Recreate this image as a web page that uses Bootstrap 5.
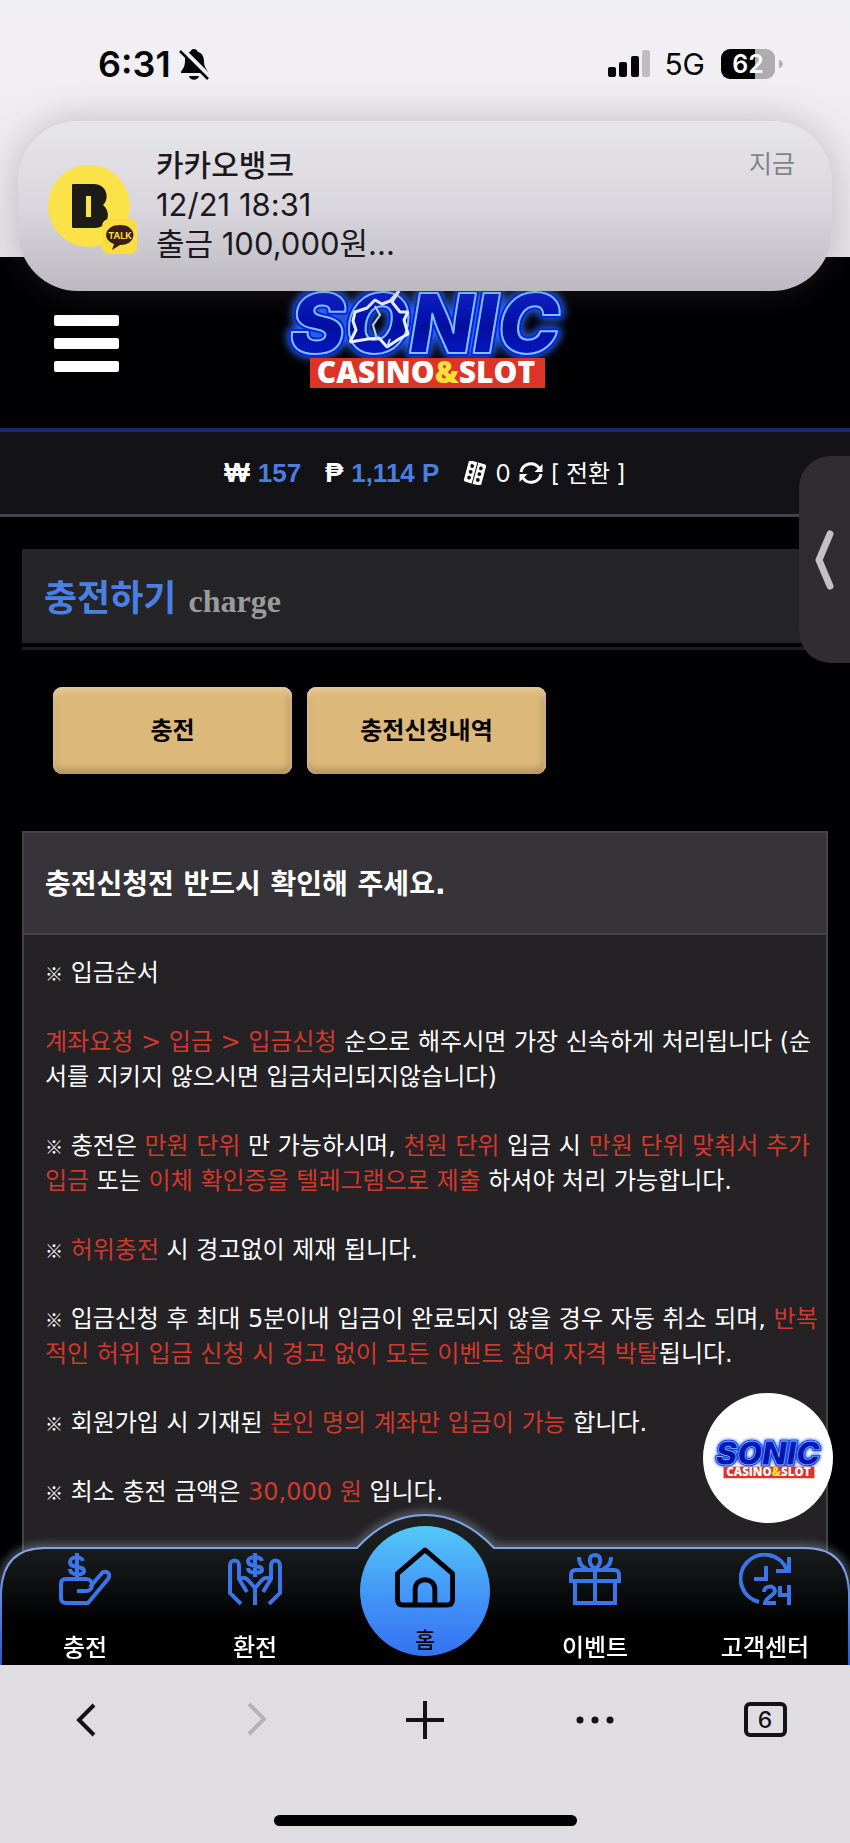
<!DOCTYPE html>
<html lang="ko">
<head>
<meta charset="utf-8">
<meta name="viewport" content="width=device-width, initial-scale=1">
<title>충전하기</title>
<link href="https://cdn.jsdelivr.net/npm/bootstrap@5.3.0/dist/css/bootstrap.min.css" rel="stylesheet">
<style>
  body { background: #010003; color: #fff; font-family: "Noto Sans CJK KR", sans-serif; font-size: 24px; line-height: 35px; }
  a { color: inherit; text-decoration: none; }
  svg { display: block; }
  .latin { font-family: "Inter", "Noto Sans CJK KR", sans-serif; }

  /* phone status area and notification */
  .status-area { height: 257px; background: linear-gradient(#f0eff1 0, #f1eff3 70px, #e6e4e8 257px); color: #050507; padding: 42px 67px 0 98px; }
  .clock { font-size: 36px; line-height: 44px; font-weight: 600; }
  .carrier { font-size: 30px; line-height: 44px; }
  .signal { margin-right: 13px; }
  .battery { width: 54px; height: 30px; border-radius: 9px; background: linear-gradient(90deg, #000 63%, #aeacb0 63%); color: #fff; font-size: 25px; line-height: 30px; font-weight: 600; text-align: center; }
  .notice { top: 121px; left: 18px; right: 18px; height: 170px; border-radius: 60px; padding: 24px 37px 0 30px; background: linear-gradient(#e6e5e8 0, #d9d7dd 50%, #bcb9c1 100%); color: #1b191f; box-shadow: 0 0 36px rgba(80, 76, 90, .3); z-index: 5; }
  .notice-text { font-size: 31px; line-height: 39px; }
  .notice-text strong { font-size: 30px; font-weight: 500; }
  .notice-time { color: #858289; font-size: 25px; }
  .avatar { width: 97px; height: 90px; margin-top: 19px; margin-right: 11px; }

  /* site header */
  .site-head { height: 175px; border-bottom: 4px solid #152a66; }
  .menu-btn { margin-left: 54px; margin-top: 13px; border: 0; padding: 0; background: none; }
  .menu-btn span { display: block; width: 65px; height: 11px; margin-bottom: 12px; border-radius: 2px; background: #fff; }
  .site-logo { left: 0; right: 0; top: 25px; }
  .wallet { height: 85px; background: #131216; border-bottom: 3px solid #444347; }
  .wallet-num { color: #4a7fdf; font: bold 26px/35px "Liberation Sans", sans-serif; }
  .coin { font: bold 27px/35px "Liberation Sans", sans-serif; }
  .side-tab { top: 456px; right: 0; width: 51px; height: 207px; border: 0; border-radius: 32px 0 0 32px; background: #302d32; padding: 0 0 0 16px; z-index: 4; }

  /* page title and tabs */
  .page-wrap { padding: 32px 22px 0; }
  .page-title { height: 94px; padding: 0 22px; gap: 12px; background: #252427; font-size: 36px; font-weight: 700; color: #4a80e4; margin: 0; }
  .page-title small { font: bold 32px/36px "Liberation Serif", serif; color: #9b9a9c; padding-top: 10px; }
  .title-rule { height: 3px; margin-top: 4px; background: #1d1c1f; }
  .tabs-row { padding: 37px 31px 57px; gap: 15px; }
  .gold-btn { width: 239px; height: 87px; border: 0; border-radius: 9px; background: #dcb87a; color: #060504; font-size: 24px; font-weight: 700; padding: 0 0 4px; box-shadow: inset 0 4px 6px #e8cd9c, inset 0 -5px 7px #b2945f, inset -4px 0 5px #c0a06a; }

  .guide { border: 2px solid #444347; background: #242225; padding-bottom: 300px; font-family: "DejaVu Sans", "Noto Sans CJK KR", sans-serif; }
  .guide-head { height: 102px; padding: 4px 21px 0; background: #363438; border-bottom: 2px solid #444347; font-size: 28px; font-weight: 700; margin: 0; }
  .guide-body { padding: 21px 0 0 21px; white-space: nowrap; }
  .guide-body p { margin: 0 0 34px; }
  .guide-body em { font-style: normal; color: #d0392c; }
  .note-mark { font: 18px/18px "Noto Sans CJK KR", sans-serif; }

  .float-logo { top: 1393px; right: 17px; width: 130px; height: 130px; border-radius: 50%; background: #fff; z-index: 2; }

  /* bottom navigation and browser bar */
  .dock { height: 117px; }
  .dock-bg { left: 0; bottom: 0; }
  .dock-item { width: 170px; height: 117px; flex: 0 1 170px; padding-top: 5px; font-size: 24px; font-weight: 500; color: #fff; }
  .dock-item svg { margin-bottom: 23px; }
  .home-item { height: 130px; width: 130px; margin: -22px 20px 0; padding-top: 20px; border-radius: 50%; background: linear-gradient(#54c8f7, #418ff8 60%, #3473f0); color: #02040a; flex: 0 0 130px; font-size: 22px; }
  .home-item svg { margin-bottom: 12px; }
  .browser { height: 178px; background: #dfdde2; }
  .browser button { border: 0; background: none; padding: 0; height: 109px; color: #141217; }
  .tab-count { width: 43px; height: 35px; border: 4px solid #141217; border-radius: 6px; font-size: 23px; line-height: 28px; font-weight: 500; }
  .home-bar { width: 303px; height: 11px; border-radius: 6px; background: #000; margin-top: 41px; }
</style>
</head>
<body class="min-vh-100 position-relative overflow-x-hidden">

<svg width="0" height="0" class="position-absolute" aria-hidden="true">
  <defs>
    <linearGradient id="blueInk" x1="0" y1="0" x2="0" y2="1"><stop offset="0" stop-color="#0a1fe8"/><stop offset=".55" stop-color="#0310a0"/><stop offset="1" stop-color="#0619d8"/></linearGradient>
    <filter id="glow" x="-20%" y="-30%" width="140%" height="160%"><feGaussianBlur stdDeviation="4"/></filter>
    <symbol id="wordmark" viewBox="0 0 300 110">
      <g font-family="Inter" font-weight="900" font-style="italic" font-size="83" stroke-linejoin="round">
        <text x="15" y="71" fill="#1d50e8" stroke="#2a6bf5" stroke-width="9" filter="url(#glow)">SONIC</text>
        <text x="15" y="71" fill="url(#blueInk)" stroke="#0a1fe8" stroke-width="6">SONIC</text>
        <text x="15" y="71" fill="url(#blueInk)" stroke="#7fc4ff" stroke-width="2">SONIC</text>
      </g>
      <rect x="35" y="76" width="235" height="30" fill="#dc3426"/>
      <text x="151" y="101" text-anchor="middle" font-family="Open Sans" font-weight="800" font-size="30" fill="#fff">CASINO<tspan fill="#fbe03a">&amp;</tspan>SLOT</text>
    </symbol>
  </defs>
</svg>

<div class="status-area latin d-flex justify-content-between align-items-start">
  <div class="d-flex align-items-center gap-2">
    <span class="clock">6:31</span>
    <svg width="30" height="32" viewBox="0 0 30 32" aria-label="무음"><path fill="#050507" d="M15 1c2 0 3 1 3.400 2.500C23 5 25 9 25 13c0 7 3 8 4 11v1H2v-1c1-3 4-4 4-11 0-4 1-8 5.600-9.500C12 2 13 1 15 1zM10 28h10c-1 5-9 5-10 0z"/><path d="M2 1l28 28" stroke="#f0eff2" stroke-width="6"/><path d="M1 3l28 28" stroke="#050507" stroke-width="2.500"/></svg>
  </div>
  <div class="d-flex align-items-center">
    <svg width="43" height="28" viewBox="0 0 43 28" class="signal"><g fill="#050507"><rect y="17" width="8" height="10" rx="2"/><rect x="11" y="12" width="8" height="15" rx="2"/><rect x="23" y="6" width="8" height="21" rx="2"/></g><rect x="34" width="8" height="27" rx="2" fill="#bfbdc1"/></svg>
    <span class="carrier me-3">5G</span>
    <span class="battery">62</span>
    <svg width="4" height="8" viewBox="0 0 4 8" class="ms-1"><path d="M0 0c5 1 5 7 0 8z" fill="#aeacb0"/></svg>
  </div>
</div>

<section class="notice position-absolute d-flex align-items-start">
  <svg class="avatar" viewBox="0 0 97 90" aria-label="카카오뱅크"><circle cx="41" cy="42" r="41" fill="#fae248"/><path fill="#1d1b17" fill-rule="evenodd" d="M25 20h21c13 0 16 15 9 21 9 7 5 23-8 23H25q-1 0-1-1V21q0-1 1-1zM38 32v21h5V32z"/><rect x="54" y="55" width="35" height="35" rx="7" fill="#f9de3e"/><path fill="#3a1d1c" d="M72 61c18 0 18 20 0 20l-8 5 2-6c-13-5-9-19 6-19z"/><text x="72" y="75" text-anchor="middle" font-family="Inter" font-size="9" font-weight="700" fill="#f9de3e">TALK</text></svg>
  <div class="notice-text latin flex-grow-1">
    <strong>카카오뱅크</strong><br>12/21 18:31<br>출금 100,000원...
  </div>
  <span class="notice-time">지금</span>
</section>

<header class="site-head position-relative d-flex align-items-center">
  <button class="menu-btn" aria-label="메뉴"><span></span><span></span><span></span></button>
  <a href="#" class="site-logo position-absolute d-flex justify-content-center" aria-label="SONIC CASINO&amp;SLOT">
    <svg width="300" height="110" viewBox="0 0 300 110"><use href="#wordmark" width="300" height="110"/>
      <path d="M124 9l-7 11 8 10 8 0-4 8 4 14-9 5-12 8-8-9-11 1-18 3 6-12-3-9 2-9 12-4 8-8 7 4 8-3z" fill="none" stroke="#eaf3ff" stroke-width="3" stroke-linejoin="bevel"/>
      <path d="M100 24l5 9-7 10 4 14M112 65l3-8" fill="none" stroke="#bcd9ff" stroke-width="2"/></svg>
  </a>
</header>

<div class="wallet latin d-flex justify-content-center align-items-center">
  <span class="coin me-2">₩</span><span class="wallet-num me-4">157</span>
  <span class="coin me-2">₱</span><span class="wallet-num me-4">1,114 P</span>
  <svg width="24" height="24" viewBox="0 0 24 24" class="me-2"><g transform="rotate(15 12 12)"><rect x="3" y="1" width="18" height="22" rx="2" fill="#fff"/><path d="M12 1v22" stroke="#131216" stroke-width="1"/><g fill="#131216"><circle cx="7.500" cy="6" r="1.900"/><circle cx="7.500" cy="12" r="1.900"/><circle cx="7.500" cy="18" r="1.900"/><circle cx="16.500" cy="6" r="1.900"/><circle cx="16.500" cy="12" r="1.900"/><circle cx="16.500" cy="18" r="1.900"/></g></g></svg>
  <span class="me-2">0</span>
  <svg width="24" height="24" viewBox="0 0 24 24" class="me-2"><g fill="none" stroke="#fff" stroke-width="3"><path d="M2 11A10 10 0 0 1 20 7M22 13A10 10 0 0 1 4 17"/></g><path fill="#fff" d="M23.500 3v8h-8zM.500 21v-8h8z"/></svg>
  <a href="#">[ 전환 ]</a>
</div>

<button class="side-tab position-absolute" aria-label="열기"><svg width="20" height="60" viewBox="0 0 20 60"><path d="M15 4L4 30l11 26" fill="none" stroke="#c2c1c4" stroke-width="7" stroke-linecap="round" stroke-linejoin="round"/></svg></button>

<main class="page-wrap">
  <h1 class="page-title d-flex align-items-center"><span>충전하기</span> <small>charge</small></h1>
  <div class="title-rule"></div>
  <div class="tabs-row d-flex">
    <button class="gold-btn">충전</button>
    <button class="gold-btn">충전신청내역</button>
  </div>

  <section class="guide">
    <h2 class="guide-head d-flex align-items-center">충전신청전 반드시 확인해 주세요.</h2>
    <div class="guide-body">
      <p><span class="note-mark">※</span> 입금순서</p>
      <p><em>계좌요청 &gt; 입금 &gt; 입금신청</em> 순으로 해주시면 가장 신속하게 처리됩니다 (순<br>서를 지키지 않으시면 입금처리되지않습니다)</p>
      <p><span class="note-mark">※</span> 충전은 <em>만원 단위</em> 만 가능하시며, <em>천원 단위</em> 입금 시 <em>만원 단위 맞춰서 추가<br>입금</em> 또는 <em>이체 확인증을 텔레그램으로 제출</em> 하셔야 처리 가능합니다.</p>
      <p><span class="note-mark">※</span> <em>허위충전</em> 시 경고없이 제재 됩니다.</p>
      <p><span class="note-mark">※</span> 입금신청 후 최대 5분이내 입금이 완료되지 않을 경우 자동 취소 되며, <em>반복<br>적인 허위 입금 신청 시 경고 없이 모든 이벤트 참여 자격 박탈</em>됩니다.</p>
      <p><span class="note-mark">※</span> 회원가입 시 기재된 <em>본인 명의 계좌만 입금이 가능</em> 합니다.</p>
      <p><span class="note-mark">※</span> 최소 충전 금액은 <em>30,000 원</em> 입니다.</p>
    </div>
  </section>
</main>

<a href="#" class="float-logo position-absolute d-flex align-items-center justify-content-center" aria-label="SONIC CASINO&amp;SLOT"><svg width="116" height="43"><use href="#wordmark"/></svg></a>

<footer class="fixed-bottom">
  <nav class="dock position-relative">
    <svg class="dock-bg position-absolute w-100" height="170" viewBox="0 0 850 170" preserveAspectRatio="none" aria-hidden="true">
      <defs><linearGradient id="dockFill" x1="0" y1="0" x2="0" y2="1"><stop offset="0" stop-color="#202224"/><stop offset=".25" stop-color="#181b1c"/><stop offset=".7" stop-color="#010102"/></linearGradient>
      <linearGradient id="dockLine" x1="0" y1="0" x2="0" y2="1"><stop offset=".3" stop-color="#82a4e6"/><stop offset="1" stop-color="#2a55c8"/></linearGradient></defs>
      <path d="M1 172V97Q3 53 45 53H357Q387 20 425 20T494 53H805Q847 53 849 97V172" fill="none" stroke="#8fa4b8" stroke-width="8" opacity=".5" filter="url(#glow)"/>
      <path d="M1 172V97Q3 53 45 53H357Q387 20 425 20T494 53H805Q847 53 849 97V172" fill="url(#dockFill)" stroke="url(#dockLine)" stroke-width="2"/>
    </svg>
    <div class="position-relative d-flex justify-content-between">
      <a href="#" class="dock-item d-flex flex-column align-items-center"><svg width="52" height="52" viewBox="0 0 52 52" fill="none" stroke="#3a76ea" stroke-width="4"><path d="M24 8c-1-5-13-5-13 1 0 7 14 3 14 9 0 5-14 5-14-2M18 0v26M18 38h9c8 0 8-12 0-12H7q-5 0-5 5v14q0 5 5 5h22l20-24c4-6-3-9-6-6L31 34" stroke-linejoin="round"/></svg>충전</a>
      <a href="#" class="dock-item d-flex flex-column align-items-center"><svg width="54" height="52" viewBox="0 0 54 52" fill="none" stroke="#3a76ea" stroke-width="4"><path d="M34 8c-1-5-14-5-14 0 0 7 14 3 14 9 0 4-14 4-14-2M27 0v24M13 51L2 40V12c0-6 9-6 9 0v14l8 13M11 28c2-4 6-4 9-1l7 8v17M41 51l11-11V12c0-6-9-6-9 0v14l-8 13M43 28c-2-4-6-4-9-1l-7 8"/></svg>환전</a>
      <a href="#" class="dock-item home-item d-flex flex-column align-items-center"><svg width="62" height="64" viewBox="0 0 62 64" fill="none" stroke="#02040a" stroke-width="5" stroke-linejoin="round"><path d="M3 28L31 4l28 24v26q0 6-6 6H9q-6 0-6-6zM21 60V44c0-13 20-13 20 0v16"/></svg>홈</a>
      <a href="#" class="dock-item d-flex flex-column align-items-center"><svg width="52" height="52" viewBox="0 0 52 52" fill="none" stroke="#3a76ea" stroke-width="4"><path d="M6 30v20h40V30M2 30V22q0-5 5-5h38q5 0 5 5v6H2M26 17v33M26 16c-7-5-7-14 0-14s7 9 0 14zM10 4c0 8 4 10 8 12M42 4c0 8-4 10-8 12"/></svg>이벤트</a>
      <a href="#" class="dock-item d-flex flex-column align-items-center"><svg width="52" height="52" viewBox="0 0 52 52" fill="none" stroke="#3a76ea" stroke-width="4"><path d="M20 49A24 24 0 1 1 48 17M50 4v14H37M27 13v13H15M25 39c0-7 11-7 11-1 0 4-10 7-10 12h11M41 33v9h9M50 32v20"/></svg>고객센터</a>
    </div>
  </nav>
  <div class="browser latin">
    <div class="row g-0">
      <div class="col d-flex justify-content-center"><button aria-label="뒤로"><svg width="22" height="36" viewBox="0 0 22 36"><path d="M20 3L5 18l15 15" fill="none" stroke="#141217" stroke-width="4"/></svg></button></div>
      <div class="col d-flex justify-content-center"><button aria-label="앞으로"><svg width="22" height="36" viewBox="0 0 22 36"><path d="M5 2l15 15L5 32" fill="none" stroke="#b4b2b7" stroke-width="4"/></svg></button></div>
      <div class="col d-flex justify-content-center"><button aria-label="새 탭"><svg width="38" height="38" viewBox="0 0 38 38"><path d="M0 19h38M19 0v38" stroke="#141217" stroke-width="4"/></svg></button></div>
      <div class="col d-flex justify-content-center"><button aria-label="더 보기"><svg width="38" height="8" viewBox="0 0 38 8"><g fill="#141217"><circle cx="4" cy="4" r="3.500"/><circle cx="19" cy="4" r="3.500"/><circle cx="34" cy="4" r="3.500"/></g></svg></button></div>
      <div class="col d-flex justify-content-center"><button aria-label="탭 6개"><span class="tab-count d-block">6</span></button></div>
    </div>
    <div class="home-bar mx-auto"></div>
  </div>
</footer>

<script src="https://cdn.jsdelivr.net/npm/bootstrap@5.3.0/dist/js/bootstrap.bundle.min.js"></script>
</body>
</html>
